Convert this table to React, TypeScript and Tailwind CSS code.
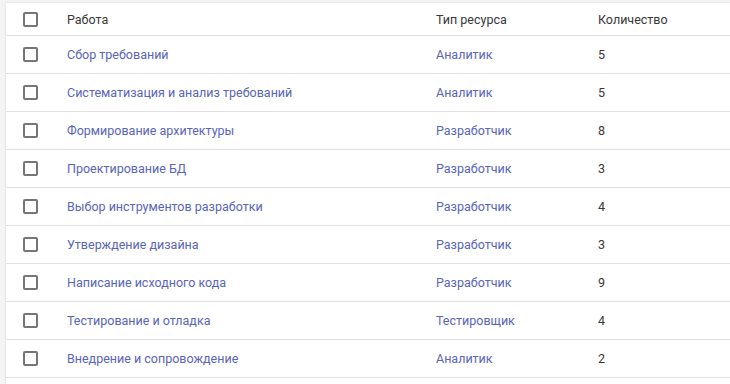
const rows = [
  { work: "Сбор требований", type: "Аналитик", count: 5 },
  { work: "Систематизация и анализ требований", type: "Аналитик", count: 5 },
  { work: "Формирование архитектуры", type: "Разработчик", count: 8 },
  { work: "Проектирование БД", type: "Разработчик", count: 3 },
  { work: "Выбор инструментов разработки", type: "Разработчик", count: 4 },
  { work: "Утверждение дизайна", type: "Разработчик", count: 3 },
  { work: "Написание исходного кода", type: "Разработчик", count: 9 },
  { work: "Тестирование и отладка", type: "Тестировщик", count: 4 },
  { work: "Внедрение и сопровождение", type: "Аналитик", count: 2 },
];

function Checkbox() {
  return (
    <span className="block w-[15px] h-[15px] border-2 border-[#767676] rounded-[2px] ml-[17px]" />
  );
}

// text sits a pixel lower than the checkbox in the original
const cols = "grid grid-cols-[61px_369px_162px_1fr] items-center [&>span+span]:translate-y-[1px]";

export default function App() {
  return (
    <div
      className="w-[730px] h-[384px] overflow-hidden bg-[#f4f4f4] pt-[3px] pl-[6px] text-[12.5px]"
      style={{ fontFamily: "Roboto, 'Noto Sans', sans-serif" }}
    >
      <div className="bg-white h-full shadow-[0_0_2px_rgba(0,0,0,0.15)]">
        <div className={`${cols} h-[33px] border-b border-[#e0e0e0] text-[#383838]`}>
          <Checkbox />
          <span>Работа</span>
          <span>Тип ресурса</span>
          <span>Количество</span>
        </div>
        {rows.map((r, i) => (
          <div key={i} className={`${cols} h-[38px] border-b border-[#e0e0e0]`}>
            <Checkbox />
            <span className="text-[#5965b8]">{r.work}</span>
            <span className="text-[#5965b8]">{r.type}</span>
            <span className="text-[#383838]">{r.count}</span>
          </div>
        ))}
      </div>
    </div>
  );
}
